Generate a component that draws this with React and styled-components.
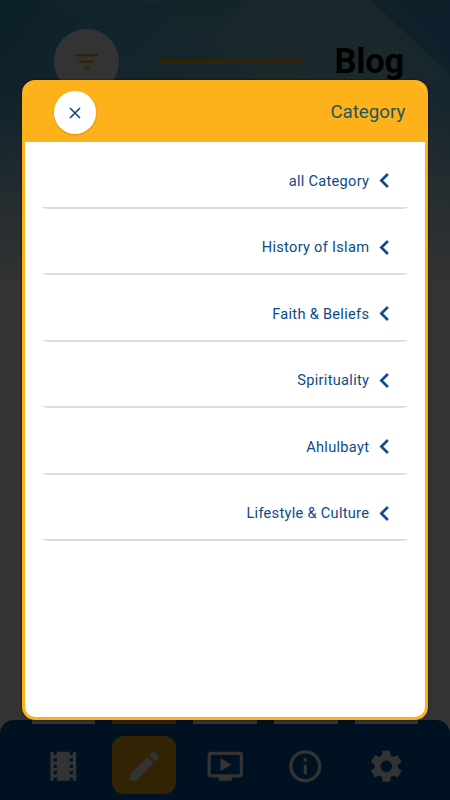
import React from "react";
import styled, { createGlobalStyle } from "styled-components";
import {
  MdChevronLeft,
  MdEdit,
  MdInfoOutline,
  MdLocalMovies,
  MdOndemandVideo,
  MdSettings
} from "react-icons/md";

const GlobalStyle = createGlobalStyle`
  * {
    box-sizing: border-box;
  }
  body {
    margin: 0;
    background: white;
    font-family: Roboto, sans-serif;
  }
`;

const Page = styled.div`
  display: flex;
  flex-direction: column;
  justify-content: space-between;
  position: relative;
  width: 450px;
  height: 800px;
  overflow: hidden;
  background: white;
`;

const Artwork = styled.svg`
  position: absolute;
  top: 0;
  left: 0;
`;

const PageHeader = styled.div`
  display: flex;
  align-items: center;
  position: relative;
  padding: 29px 46px 0 54px;
`;

const FilterButton = styled.button`
  display: flex;
  align-items: center;
  justify-content: center;
  width: 65px;
  height: 65px;
  padding: 0;
  border: none;
  border-radius: 50%;
  background: white;
`;

const HeaderLine = styled.div`
  width: 145px;
  height: 4px;
  margin-left: 40px;
  border-radius: 2px;
  background: #fdb11b;
`;

const PageTitle = styled.h1`
  margin: 0 0 2px auto;
  color: black;
  font-size: 34.5px;
  font-weight: 700;
  line-height: 40px;
  letter-spacing: -0.2px;
`;

const NavBar = styled.div`
  display: flex;
  justify-content: center;
  gap: 17px;
  position: relative;
  height: 80px;
  border-radius: 14px 14px 0 0;
  background: #005aa5;
`;

const NavItem = styled.div`
  display: flex;
  flex-direction: column;
  gap: 12px;
  width: 63.7px;
  &:before {
    content: "";
    height: 4px;
    background: ${props => (props.$active ? "#fdb11b" : "white")};
  }
`;

const NavTile = styled.div`
  display: flex;
  align-items: center;
  justify-content: center;
  height: 58px;
  padding-top: 2px;
  border-radius: 12px;
  background: ${props => (props.$active ? "#fdb11b" : "none")};
  color: white;
  font-size: 38.6px;
`;

const Overlay = styled.div`
  display: flex;
  align-items: flex-start;
  justify-content: center;
  position: absolute;
  top: 0;
  left: 0;
  width: 100%;
  height: 100%;
  padding-top: 80px;
  background: rgba(0, 0, 0, 0.8);
`;

const Dialog = styled.div`
  width: 405.5px;
  height: 640px;
  overflow: hidden;
  border: 3px solid #fdb11b;
  border-radius: 13px;
  background: white;
  box-shadow: 0 0 2px rgba(0, 0, 0, 0.8);
`;

const DialogHeader = styled.div`
  display: flex;
  align-items: center;
  justify-content: space-between;
  height: 59px;
  padding: 0 19.5px 0 28.5px;
  background: #fdb11b;
`;

const CloseButton = styled.button`
  display: flex;
  align-items: center;
  justify-content: center;
  width: 42.5px;
  height: 42.5px;
  padding: 0;
  border: none;
  border-radius: 50%;
  background: white;
  box-shadow: 0 1px 2px rgba(0, 0, 0, 0.2);
`;

const DialogTitle = styled.h2`
  margin: 0 0 2px;
  color: #24585c;
  font-size: 18.7px;
  font-weight: 400;
`;

const List = styled.div`
  display: flex;
  flex-direction: column;
  gap: 12.5px;
  padding: 12.5px 16.5px 0;
`;

const Row = styled.div`
  display: flex;
  align-items: center;
  justify-content: flex-end;
  height: 54px;
  padding-right: 9px;
  border-bottom: 2px solid #dadcde;
  border-radius: 0 0 10px 10px / 0 0 2px 2px;
  color: #0c4a8c;
  font-size: 14.6px;
  letter-spacing: 0.29px;
  svg {
    margin-left: 1px;
    font-size: 29px;
  }
  path:last-child {
    stroke: currentColor;
    stroke-width: 0.3px;
  }
`;

const navItems = [
  { icon: MdLocalMovies },
  { icon: MdEdit, active: true },
  { icon: MdOndemandVideo },
  { icon: MdInfoOutline },
  { icon: MdSettings }
];

const categories = [
  "all Category",
  "History of Islam",
  "Faith & Beliefs",
  "Spirituality",
  "Ahlulbayt",
  "Lifestyle & Culture"
];

const HeaderArtwork = () => (
  <Artwork width="450" height="290" viewBox="0 0 450 290">
    <defs>
      <linearGradient id="sky">
        <stop offset="0" stopColor="#40a4d8" />
        <stop offset="0.2" stopColor="#5cb8dc" />
        <stop offset="0.5" stopColor="#70c0d8" />
        <stop offset="0.85" stopColor="#7cc6d8" />
        <stop offset="1" stopColor="#5cb4dc" />
      </linearGradient>
      <linearGradient id="fade" x1="0" y1="0" x2="0" y2="1">
        <stop offset="0" stopColor="white" stopOpacity="0" />
        <stop offset="0.35" stopColor="white" stopOpacity="0.1" />
        <stop offset="0.65" stopColor="white" stopOpacity="0.55" />
        <stop offset="1" stopColor="white" />
      </linearGradient>
    </defs>
    <rect width="450" height="290" fill="url(#sky)" />
    <path d="M0 0H50L70 18L0 80Z" fill="#3498c8" opacity="0.3" />
    <path d="M60 15L182 0L118 65L80 100H0V90Z" fill="#2c96cc" opacity="0.2" />
    <path d="M182 0L118 65V80H250L208 38L245 0Z" fill="#48a8c4" opacity="0.25" />
    <path d="M208 38L245 0H370L450 80H250Z" fill="#8cc8d0" opacity="0.25" />
    <path d="M370 0H450V75Z" fill="#1e86cc" opacity="0.5" />
    <rect width="450" height="290" fill="url(#fade)" />
  </Artwork>
);

const FilterIcon = () => (
  <svg width="23" height="16" viewBox="0 0 23 16" fill="#fdb11b">
    <rect x="0" y="0" width="22.5" height="2.4" />
    <rect x="4" y="6.4" width="15" height="2.4" />
    <rect x="9" y="12.6" width="5" height="2.8" />
  </svg>
);

const CloseIcon = () => (
  <svg width="12" height="12" viewBox="0 0 12 12" stroke="#0c4a8c">
    <path d="M1 1L11 11M11 1L1 11" strokeWidth="1.6" />
  </svg>
);

export default () => {
  return (
    <Page>
      <GlobalStyle />
      <HeaderArtwork />
      <PageHeader>
        <FilterButton>
          <FilterIcon />
        </FilterButton>
        <HeaderLine />
        <PageTitle>Blog</PageTitle>
      </PageHeader>
      <NavBar>
        {navItems.map(({ icon: Icon, active }, i) => (
          <NavItem key={i} $active={active}>
            <NavTile $active={active}>
              <Icon />
            </NavTile>
          </NavItem>
        ))}
      </NavBar>
      <Overlay>
        <Dialog>
          <DialogHeader>
            <CloseButton>
              <CloseIcon />
            </CloseButton>
            <DialogTitle>Category</DialogTitle>
          </DialogHeader>
          <List>
            {categories.map(category => (
              <Row key={category}>
                {category}
                <MdChevronLeft />
              </Row>
            ))}
          </List>
        </Dialog>
      </Overlay>
    </Page>
  );
};
